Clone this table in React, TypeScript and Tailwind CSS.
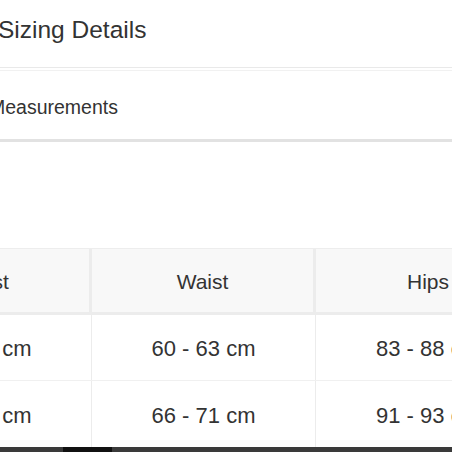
import React from "react";

const cols = ["Chest", "Waist", "Hips"];
const rows = [
  ["80 - 83 cm", "60 - 63 cm", "83 - 88 cm"],
  ["86 - 89 cm", "66 - 71 cm", "91 - 93 cm"],
];

export default function App() {
  return (
    <div
      className="relative w-[452px] h-[452px] overflow-hidden bg-white text-[#333333]"
      style={{ fontFamily: '"Liberation Sans", Arial, sans-serif' }}
    >
      <div className="h-[68px] pt-[16px] ml-[-2px] border-b border-[#e9e9e9]">
        <div className="text-[24.5px] leading-[28px]">Sizing Details</div>
      </div>
      <div className="h-[3px] border-b border-[#f1f1f1]"></div>
      <div className="h-[71px] pt-[24px] ml-[-11px] border-b-[3px] border-[#e2e2e2]">
        <div className="text-[19.5px] leading-[24px]">Measurements</div>
      </div>
      <div className="h-[106px]"></div>
      <div className="ml-[-132px] w-[672px] border-t border-[#ededed]">
        <div className="grid grid-cols-3 h-[66px] bg-[#f8f8f8] border-b-[3px] border-[#ececec]">
          {cols.map((c, i) => (
            <div
              key={c}
              className={`flex items-center justify-center pt-[3px] text-[21px] ${i === 0 ? "pl-[6px]" : ""} ${i < 2 ? "border-r-[3px] border-[#ececec]" : ""}`}
            >
              {c}
            </div>
          ))}
        </div>
        {rows.map((r, ri) => (
          <div
            key={ri}
            className={`grid grid-cols-3 h-[66px] ${ri === 0 ? "border-b border-[#f0f0f0]" : ""}`}
          >
            {r.map((v, i) => (
              <div
                key={i}
                className={`flex items-center justify-center pt-[2px] text-[22px] ${i < 2 ? "border-r border-[#ececec]" : ""}`}
              >
                {v}
              </div>
            ))}
          </div>
        ))}
      </div>
      <div className="absolute left-0 bottom-0 w-[452px] h-[5px] bg-[#3a3a3a] flex">
        <div className="w-[63px]"></div>
        <div className="w-[49px] bg-[#111111]"></div>
      </div>
    </div>
  );
}
